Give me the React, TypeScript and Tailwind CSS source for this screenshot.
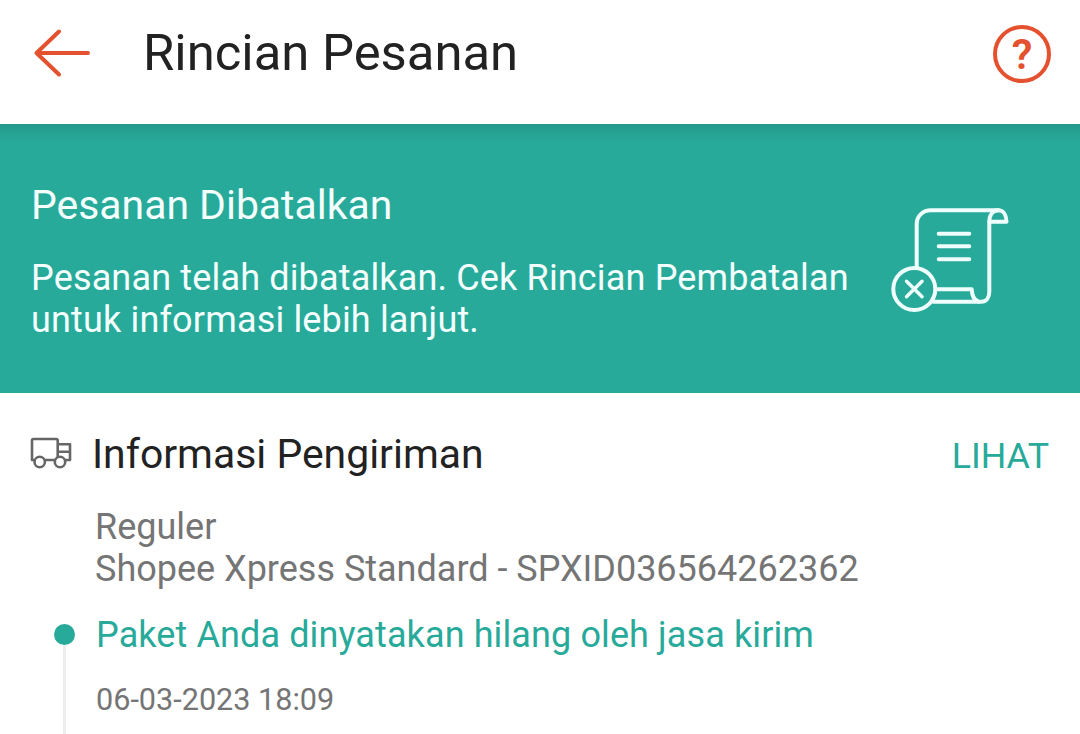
function BackIcon() {
  return (
    <svg className="h-14 w-16" viewBox="0 0 64 56" fill="none" stroke="#e4512f" strokeWidth="4" strokeLinecap="round" strokeLinejoin="round">
      <path d="M29 6.500L6.500 28 29 49.500M8 28h50" />
    </svg>
  );
}

function CancelledOrderIcon() {
  return (
    <svg className="h-[110px] w-[120px] shrink-0" viewBox="0 0 120 110" fill="none" stroke="#effffd" strokeWidth="4" strokeLinecap="round" strokeLinejoin="round">
      <path d="M26.700 62V19C26.700 11 33 5.300 41 5.300h67.300c5 0 8 4.700 8.200 11.400H99.500" />
      <path d="M108.300 5.300C102.500 5.500 99.300 10 99.300 17V87c0 5.500-3 9.700-8 9.700H43.500" />
      <path d="M46 84.300h35.700c.300 6.200 2 10.400 6.600 12.200" />
      <path d="M48.700 28.700h30.600M48.700 41.300h30.600M48.700 54.300h30.600" />
      <circle cx="24.300" cy="84" r="21" />
      <path d="M16.500 76.200l15.600 15.600M32.100 76.200L16.500 91.800" strokeWidth="3.400" />
    </svg>
  );
}

function TruckIcon() {
  return (
    <svg className="h-9 w-11" viewBox="0 0 44 36" fill="none" stroke="#666666" strokeWidth="2.600" strokeLinejoin="round">
      <path d="M4.500 24H2V4.500Q2 3 3.500 3H26.200Q27.700 3 27.700 4.500V21M15 24H25M35 24h5V8.300H27.700M27.700 15.700H40" />
      <circle cx="9.700" cy="26" r="5.200" />
      <circle cx="30" cy="26" r="5.200" />
    </svg>
  );
}

export default function App() {
  return (
    <main className="flex h-[734px] w-[1080px] flex-col overflow-hidden bg-white font-[Roboto,sans-serif] text-[#222222]">
      {/* Header */}
      <header className="flex h-[124px] shrink-0 items-start pr-[29px] pl-[30px]">
        <button className="mt-[25px]" aria-label="Kembali">
          <BackIcon />
        </button>
        <h1 className="mt-[23px] ml-[49px] text-[50.8px] leading-[60px]">Rincian Pesanan</h1>
        <button className="mt-[25px] ml-auto flex size-[58px] items-center justify-center rounded-full border-4 border-[#e4512f] pt-0.5 text-[42px] leading-none font-semibold text-[#e4512f]">
          ?
        </button>
      </header>

      {/* Order status */}
      <section className="flex h-[269px] shrink-0 justify-between bg-[#27aa9a] bg-linear-to-b from-[#249a8c] to-[#27aa9a] to-[18px] pr-[70px] pl-[31px] text-[#f4fffe]">
        <div className="pt-[57px]">
          <h2 className="text-[40.9px] leading-[48px]">Pesanan Dibatalkan</h2>
          <p className="mt-7 text-[36px] leading-[42px] tracking-[0.16px] whitespace-nowrap">
            Pesanan telah dibatalkan. Cek Rincian Pembatalan
            <br />
            untuk informasi lebih lanjut.
          </p>
        </div>
        <div className="pt-[81px]">
          <CancelledOrderIcon />
        </div>
      </section>

      {/* Shipping */}
      <section className="pt-[37px] pr-[31px]">
        <div className="flex h-12 items-center pl-[30px]">
          <TruckIcon />
          <h2 className="ml-[18px] text-[40.9px] leading-[48px]">Informasi Pengiriman</h2>
          <a className="mt-1 ml-auto text-[35.8px] leading-[48px] text-[#27aa9a]">LIHAT</a>
        </div>
        <p className="mt-7 pl-[95px] text-[36px] leading-[42px] text-[#757575]">
          Reguler
          <br />
          Shopee Xpress Standard - SPXID036564262362
        </p>
        <div className="mt-6 flex pl-[54px]">
          <div className="flex w-5 flex-col items-center pt-[10px]">
            <span className="size-[21px] shrink-0 rounded-full bg-[#27aa9a]" />
            <span className="h-[120px] w-[3px] bg-[#eeeeee]" />
          </div>
          <div className="pl-[22px]">
            <p className="text-[36px] leading-[42px] tracking-[0.11px] text-[#27aa9a]">Paket Anda dinyatakan hilang oleh jasa kirim</p>
            <p className="mt-[26px] text-[30.6px] leading-9 text-[#757575]">06-03-2023 18:09</p>
          </div>
        </div>
      </section>
    </main>
  );
}
